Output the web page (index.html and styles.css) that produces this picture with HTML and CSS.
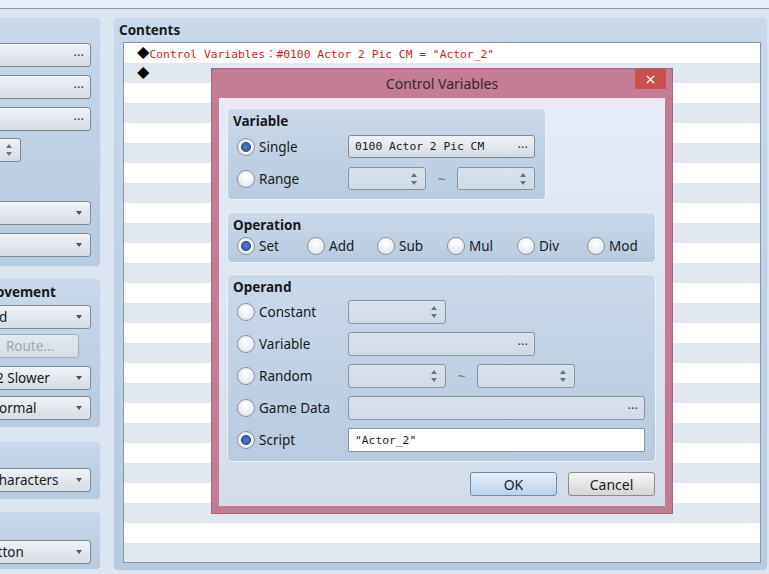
FILE: index.html
```html
<!DOCTYPE html>
<html lang="en">
<head>
    <meta charset="UTF-8">
    <meta name="viewport" content="width=device-width, initial-scale=1.0">
    <title>Event Editor</title>
    <link rel="stylesheet" href="styles.css">
</head>
<body>
<div class="topbar"></div>

<div class="main">
    <div class="side">
        <div class="group group-conditions">
            <div class="field picker cond-picker"><span class="dots">···</span></div>
            <div class="field picker cond-picker"><span class="dots">···</span></div>
            <div class="field picker cond-picker"><span class="dots">···</span></div>
            <div class="field spin cond-spin"><span class="arrows"></span></div>
            <div class="field combo cond-combo cond-gap"><span class="caret"></span></div>
            <div class="field combo cond-combo"><span class="caret"></span></div>
        </div>

        <div class="group group-movement">
            <div class="group-title">Autonomous Movement</div>
            <div class="field combo move-combo move-type">Fixed<span class="caret"></span></div>
            <div class="field button-off route">Route...</div>
            <div class="field combo move-combo move-speed">3: x2 Slower<span class="caret"></span></div>
            <div class="field combo move-combo move-freq">3: Normal<span class="caret"></span></div>
        </div>

        <div class="group group-priority">
            <div class="field combo priority-combo">Same as characters<span class="caret"></span></div>
        </div>

        <div class="group group-trigger">
            <div class="field combo trigger-combo">Action Button<span class="caret"></span></div>
        </div>
    </div>

    <div class="panel">
        <div class="panel-title">Contents</div>
        <div class="list">
            <div class="list-row"><span class="mark">◆</span><span class="cmd">Control Variables：#0100 Actor 2 Pic CM = "Actor_2"</span></div>
            <div class="list-row"><span class="mark">◆</span></div>
        </div>
    </div>
</div>

<!-- modal: Control Variables -->
<div class="dialog">
    <div class="dialog-bar">
        <span class="dialog-caption">Control Variables</span>
        <span class="dialog-close">
            <svg width="9" height="9" viewBox="0 0 9 9"><path d="M1 1 L8 8 M8 1 L1 8" stroke="#fff" stroke-width="1.4" fill="none"/></svg>
        </span>
    </div>

    <div class="dialog-body">
        <div class="box box-variable">
            <div class="box-title">Variable</div>
            <div class="opt-row">
                <span class="radio checked">Single</span>
                <div class="field picker w-187 mono">0100 Actor 2 Pic CM<span class="dots">···</span></div>
            </div>
            <div class="opt-row">
                <span class="radio">Range</span>
                <div class="field spin off w-78"><span class="arrows"></span></div>
                <span class="tilde">~</span>
                <div class="field spin off w-78"><span class="arrows"></span></div>
            </div>
        </div>

        <div class="box box-operation">
            <div class="box-title">Operation</div>
            <div class="op-row">
                <span class="radio checked">Set</span>
                <span class="radio">Add</span>
                <span class="radio">Sub</span>
                <span class="radio">Mul</span>
                <span class="radio">Div</span>
                <span class="radio">Mod</span>
            </div>
        </div>

        <div class="box box-operand">
            <div class="box-title">Operand</div>
            <div class="opt-row">
                <span class="radio">Constant</span>
                <div class="field spin off w-98"><span class="arrows"></span></div>
            </div>
            <div class="opt-row">
                <span class="radio">Variable</span>
                <div class="field picker off w-187"><span class="dots">···</span></div>
            </div>
            <div class="opt-row">
                <span class="radio">Random</span>
                <div class="field spin off w-98"><span class="arrows"></span></div>
                <span class="tilde">~</span>
                <div class="field spin off w-98"><span class="arrows"></span></div>
            </div>
            <div class="opt-row">
                <span class="radio">Game Data</span>
                <div class="field picker off w-297"><span class="dots">···</span></div>
            </div>
            <div class="opt-row">
                <span class="radio checked">Script</span>
                <div class="field text w-297 mono">"Actor_2"</div>
            </div>
        </div>

        <div class="actions">
            <div class="button default">OK</div>
            <div class="button">Cancel</div>
        </div>
    </div>
</div>
</body>
</html>
```

FILE: styles.css
```css
* {
    box-sizing: border-box;
}

body {
    margin: 0;
    position: relative;
    width: 769px;
    height: 574px;
    overflow: hidden;
    background: #dce6f2;
    font-family: "Noto Sans", sans-serif;
    font-size: 13.5px;
    color: #1a1a1a;
}

.topbar {
    height: 9px;
    background: #e7eef7;
    border-bottom: 1px solid #8e9bab;
}

.main {
    display: flex;
    gap: 12px;
    padding-top: 8px;
}

/* Left column, mostly scrolled out of view */
.side {
    flex: none;
    width: 300px;
    margin-left: -199px;
    display: flex;
    flex-direction: column;
    align-items: flex-end;
}

.group {
    border: 1px solid #d9e3ef;
    border-radius: 5px;
    background: linear-gradient(#c9d9eb, #b6cae0);
    display: flex;
    flex-direction: column;
    align-items: flex-end;
}

.group-title {
    align-self: stretch;
    font-weight: bold;
    line-height: 16px;
}

.group-conditions {
    width: 300px;
    height: 250px;
    padding: 25px 9px 0 0;
    gap: 8px;
}

.cond-picker,
.cond-combo {
    width: 200px;
}

.cond-spin {
    width: 90px;
    margin-right: 70px;
    margin-top: -1px;
}

.cond-gap {
    margin-top: 31px;
}

.group-movement {
    width: 214px;
    height: 150px;
    margin-top: 11px;
    padding: 5px 9px 0 5px;
}

.move-combo {
    width: 124px;
}

.move-type {
    margin-top: 5px;
}

.route {
    width: 98px;
    margin: 5px 12px 0 0;
    justify-content: center;
}

.move-speed {
    margin-top: 8px;
}

.move-freq {
    margin-top: 6px;
}

.group-priority {
    width: 180px;
    height: 59px;
    margin-top: 13px;
    padding: 26px 9px 0 0;
}

.priority-combo {
    width: 162px;
}

.group-trigger {
    width: 178px;
    height: 59px;
    margin-top: 11px;
    padding: 28px 9px 0 0;
}

.trigger-combo {
    width: 161px;
}

/* Contents panel */
.panel {
    flex: none;
    width: 655px;
    height: 554px;
    border: 1px solid #d9e3ef;
    border-radius: 5px;
    background: linear-gradient(#c9d9eb, #b6cae0);
    padding: 4px 6px 0 5px;
}

.panel-title {
    font-weight: bold;
    line-height: 16px;
}

.list {
    margin: 4px 0 0 4px;
    height: 521px;
    border: 1px solid #8796a8;
    background: repeating-linear-gradient(#ffffff 0 20px, #e2e8ef 20px 40px);
    font-family: "DejaVu Sans Mono", "Noto Sans CJK JP", monospace;
    font-size: 11.3px;
}

.list-row {
    height: 20px;
    line-height: 20px;
    padding-left: 13px;
    white-space: nowrap;
}

.mark {
    font-family: "Noto Sans CJK JP", sans-serif;
    font-size: 12.5px;
    color: #000;
}

.cmd {
    color: #c81e1e;
}

/* Fields */
.field {
    display: flex;
    align-items: center;
    height: 24px;
    padding: 0 6px;
    border: 1px solid #7f8b99;
    border-radius: 3px;
    background: linear-gradient(#eff3f7, #d5dce4);
    white-space: nowrap;
}

.field.off {
    border-color: #8595a9;
    background: linear-gradient(#d9e3ec, #d0dbe6);
}

.field.text {
    background: #ffffff;
    border-color: #8796a8;
    border-radius: 1px;
}

.button-off {
    color: #a2aab4;
    border-color: #9fadbd;
    background: linear-gradient(#e1e8ef, #d6dee7);
}

.mono {
    font-family: "DejaVu Sans Mono", monospace;
    font-size: 11.3px;
}

.dots {
    margin-left: auto;
    font-family: "Noto Sans", sans-serif;
    font-size: 13px;
    color: #3c3c3c;
}

.caret {
    margin-left: auto;
    margin-right: 2px;
    border-left: 3.5px solid transparent;
    border-right: 3.5px solid transparent;
    border-top: 4px solid #555;
}

.arrows {
    margin-left: auto;
    margin-right: 2px;
    display: flex;
    flex-direction: column;
    gap: 4px;
}

.arrows::before,
.arrows::after {
    content: "";
    border-left: 3px solid transparent;
    border-right: 3px solid transparent;
}

.arrows::before {
    border-bottom: 4px solid #6b7580;
}

.arrows::after {
    border-top: 4px solid #6b7580;
}

.w-78 { width: 78px; }
.w-98 { width: 98px; }
.w-187 { width: 187px; }
.w-297 { width: 297px; }

.tilde {
    width: 31px;
    text-align: center;
    color: #6d7884;
}

/* Dialog window */
.dialog {
    position: absolute;
    left: 211px;
    top: 68px;
    width: 462px;
    height: 446px;
    display: flex;
    flex-direction: column;
    padding: 0 7px 7px;
    background: #c47b94;
    border: 1px solid #a8647d;
}

.dialog-bar {
    height: 29px;
    display: grid;
    grid-template-columns: 1fr auto 1fr;
    align-items: start;
}

.dialog-caption {
    grid-column: 2;
    line-height: 30px;
    font-size: 14px;
    color: #2e2e2e;
}

.dialog-close {
    grid-column: 3;
    justify-self: end;
    margin-right: -1px;
    width: 31px;
    height: 20px;
    display: flex;
    align-items: center;
    justify-content: center;
    background: #c8504f;
}

.dialog-body {
    flex: 1;
    display: flex;
    flex-direction: column;
    padding: 10px 9px 0 8px;
    background: linear-gradient(#e4ecf7, #d3dde9);
}

.box {
    border: 1px solid #edf2f8;
    border-radius: 5px;
    background: linear-gradient(#cad9ea, #b8cbe0);
    padding: 4px 0 0 5px;
}

.box-title {
    font-weight: bold;
    line-height: 16px;
}

.box-variable {
    width: 319px;
    height: 92px;
}

.box-variable .field {
    height: 23px;
}

.box-variable .opt-row {
    height: 23px;
    margin-top: 9px;
}

.box-variable .opt-row:nth-child(2) {
    margin-top: 6px;
}

.box-operation {
    margin-top: 12px;
    height: 51px;
}

.box-operand {
    margin-top: 11px;
    height: 188px;
}

.opt-row {
    display: flex;
    align-items: center;
    height: 24px;
    margin-top: 8px;
    padding-left: 4px;
}

.box-operand .opt-row:nth-child(2) {
    margin-top: 5px;
}

.op-row {
    display: flex;
    margin-top: 5px;
    padding-left: 4px;
    height: 16px;
}

.radio {
    flex: none;
    display: flex;
    align-items: center;
    gap: 4px;
    width: 111px;
}

.op-row .radio {
    width: 70px;
}

.radio::before {
    content: "";
    flex: none;
    width: 16px;
    height: 16px;
    border-radius: 50%;
    border: 1px solid #8a9098;
    background: radial-gradient(circle at 50% 35%, #ffffff, #dce2e9);
}

.radio.checked::before {
    background: radial-gradient(circle, #587fc6 0, #3a63ad 3.5px, #2c4f8f 4.6px, #f3f5f8 5.3px, #dce2e9 100%);
}

.actions {
    display: flex;
    justify-content: flex-end;
    gap: 11px;
    margin-top: 10px;
    padding-right: 1px;
}

.button {
    width: 87px;
    height: 24px;
    display: flex;
    align-items: center;
    justify-content: center;
    border: 1px solid #8c8c8c;
    border-radius: 3px;
    background: linear-gradient(#f6f6f6, #d6d6d6);
    font-size: 14px;
}

.button.default {
    border-color: #6f8db4;
    background: linear-gradient(#e8f0fa, #b9d1ed);
}
```
